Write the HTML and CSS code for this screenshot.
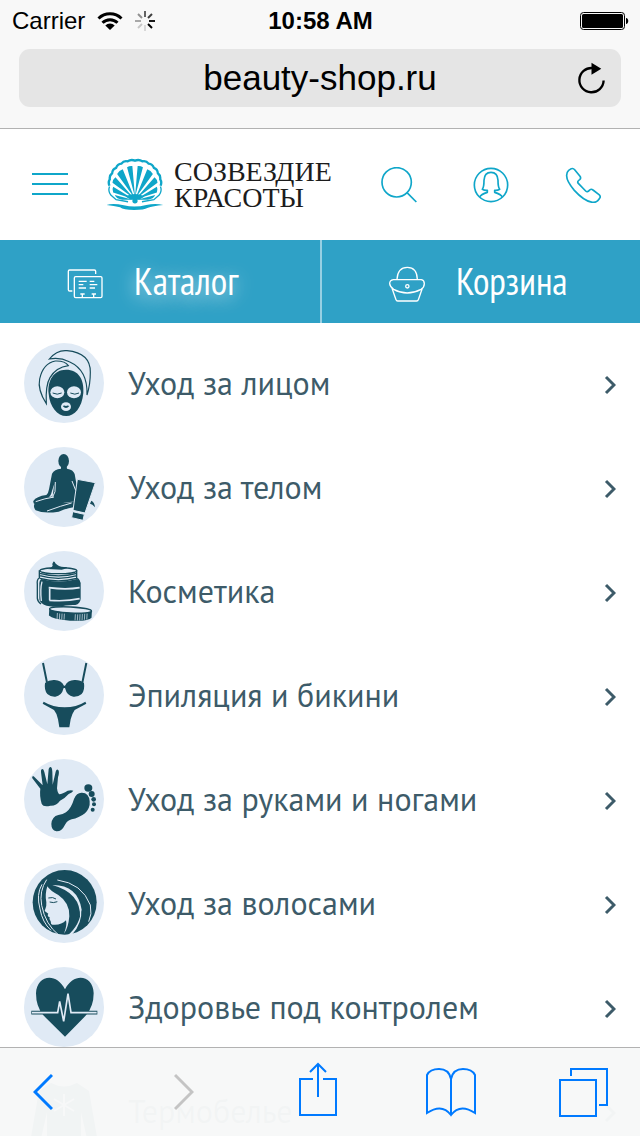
FILE: index.html
```html
<!DOCTYPE html>
<html lang="ru">
<head>
<meta charset="utf-8">
<meta name="viewport" content="width=device-width, initial-scale=1">
<title>Созвездие красоты</title>
<link rel="stylesheet" href="styles.css">
</head>
<body>
<div class="app">
  <div class="browser">
    <div class="status">
      <div class="status-left">
        <span>Carrier</span>
        <svg class="wifi" viewBox="0 0 26 20" width="26" height="20" aria-hidden="true">
          <g fill="none" stroke="#000" stroke-width="3"><path d="M1.500 7.500A16.500 16.500 0 0 1 24.500 7.500"/><path d="M5.500 11.800A10.500 10.500 0 0 1 20.500 11.800"/></g>
          <path d="M8.300 14.500A6.800 6.800 0 0 1 17.700 14.500L13 19Z"/>
        </svg>
        <svg viewBox="0 0 20 20" width="20" height="20" aria-hidden="true" fill="none" stroke="#000" stroke-width="2">
          <path d="M10 0v6" opacity=".6"/><path d="M17 3l-4 4" opacity=".75"/><path d="M20 10h-6" opacity=".9"/><path d="M17 17l-4-4"/><path d="M10 20v-6" opacity=".13"/><path d="M3 17l4-4" opacity=".2"/><path d="M0 10h6" opacity=".32"/><path d="M3 3l4 4" opacity=".42"/>
        </svg>
      </div>
      <strong class="time">10:58 AM</strong>
      <div class="status-right">
        <svg viewBox="0 0 50 20" width="50" height="20" aria-hidden="true"><rect x="1.500" y="1.500" width="44" height="17" rx="3" fill="none" stroke="#000"/><rect x="3" y="3" width="41" height="14" rx="1.500"/><path d="M47 7c3 0 3 6 0 6z"/></svg>
      </div>
    </div>
    <form class="address">
      <input class="url" type="text" value="beauty-shop.ru" aria-label="Адрес">
      <button class="reload" type="button" aria-label="Обновить">
        <svg viewBox="770 184 86 98" width="29" height="33" aria-hidden="true"><path d="M816 202A36 36 0 1 0 849 239" fill="none" stroke="#000" stroke-width="7"/><path d="M813 186l29 18-29 18z"/></svg>
      </button>
    </form>
  </div>

  <header class="header">
    <button class="icon-btn" type="button" aria-label="Меню">
      <svg viewBox="0 0 36 36" width="36" height="36" fill="none" stroke="#0fa6c9" stroke-width="2" aria-hidden="true"><path d="M0 7h36M0 17h36M0 27h36"/></svg>
    </button>
    <a class="logo" href="#">
      <svg viewBox="258 50 174 160" width="58" height="53" aria-hidden="true">
        <path d="M268 134q-5-10 1-20q-2-11 7-18q1-12 12-16q4-12 16-13q7-10 19-7q10-7 22-2q12-5 22 2q12-3 19 7q12 1 16 13q11 4 12 16q9 7 7 18q6 10 1 20" fill="none" stroke="#0fa6c9" stroke-width="7"/>
        <path d="M268 136q-5 14 4 26l16 14 36 6M422 136q5 14-4 26l-16 14-36 6" fill="none" stroke="#0fa6c9" stroke-width="4"/>
        <g fill="#0fa6c9">
          <path d="M345 168L337 74q-9-1-16 4zM345 168L353 74q9-1 16 4zM343 170L308 84q-11 4-17 14zM347 170L382 84q11 4 17 14zM342 172L286 108q-8 6-9 17zM348 172L404 108q8 6 9 17zM340 174L279 137q-4 8 0 17zM350 174L411 137q4 8 0 17zM338 176L284 162q5 12 22 14zM352 176L406 162q-5 12-22 14z"/>
          <path d="M316 166q29-14 58 0l-16 10h-26zM337 180a8 7 0 0 1 16 0a8 7 0 0 1-16 0zM259 192q20-6 52 1q34 8 68-1q28-6 51 0q-30 3-48 9q-8 6-40 6q-32 0-42-8q-18-4-41-7z"/>
        </g>
      </svg>
      <span class="logo-text">СОЗВЕЗДИЕ<br>КРАСОТЫ</span>
    </a>
    <div class="actions">
      <button class="icon-btn" type="button" aria-label="Поиск">
        <svg viewBox="63 48 108 108" width="36" height="36" fill="none" stroke="#0fa6c9" stroke-width="5" aria-hidden="true"><circle cx="110" cy="94" r="44"/><path d="M141 125l28 28"/></svg>
      </button>
      <button class="icon-btn" type="button" aria-label="Профиль">
        <svg viewBox="340 48 108 108" width="36" height="36" fill="none" stroke="#0fa6c9" stroke-width="5" stroke-linejoin="round" aria-hidden="true"><circle cx="394" cy="102" r="50"/><path d="M360 138q4-8 23-14v-6q-8 1-15-3q5-6 5-27q1-24 21-24t21 24q0 21 5 27q-7 4-15 3v6q19 6 23 14"/></svg>
      </button>
      <a class="icon-btn" href="#" aria-label="Позвонить">
        <svg viewBox="618 48 108 108" width="36" height="36" fill="none" stroke="#0fa6c9" stroke-width="5" stroke-linejoin="round" aria-hidden="true"><path d="M629 58l8-5q6-2 10 3l16 20q4 6-1 10q-9 6-4 11l22 23q5 5 11-2q5-6 11-1l18 14q5 4 3 9q-8 16-23 14q-25-4-54-36q-24-28-23-45q0-10 6-15z"/></svg>
      </a>
    </div>
  </header>

  <nav class="tabs">
    <a class="tab tab-active" href="#">
      <svg viewBox="199 93 108 108" width="36" height="36" fill="none" stroke="#fff" stroke-width="4" aria-hidden="true"><path d="M215 168h-8q-4 0-4-4v-55q0-4 4-4h74q4 0 4 4v8"/><rect x="221" y="125" width="83" height="63" rx="4"/><path d="M234 139h24M234 149h14M234 159h22M267 139h14M267 149h23M267 159h16M239 177h13M273 177h13M245 177v9M279 177v9"/></svg>
      <span>Каталог</span>
    </a>
    <a class="tab" href="#">
      <svg viewBox="207 91 108 108" width="36" height="36" fill="none" stroke="#fff" stroke-width="4" stroke-linejoin="round" aria-hidden="true"><path d="M231 131q2-36 31-36t30 36M220 132h84q9 2 9 12q0 10-10 17q-42 22-82 0q-11-7-12-17q0-10 11-12zM216 158l12 34q1 4 5 4h57q4 0 5-4l12-34"/><circle cx="262" cy="152" r="5"/></svg>
      <span>Корзина</span>
    </a>
  </nav>

  <main class="catalog">
    <ul class="list">
      <li><a class="row" href="#">
        <svg class="pic" viewBox="30 24 240 240" aria-hidden="true"><circle class="disc" cx="150" cy="144" r="120"/><g fill="none" stroke="#174c5c" stroke-width="3.500"><path d="M106 72Q129 44 159 47Q230 54 229 112Q229 150 219 180Q222 105 166 80Q137 66 106 72Z"/><path d="M97 206Q70 164 77 132Q87 85 124 78Q153 77 163 92Q126 97 108 128Q94 151 97 206Z"/></g><path class="ink" d="M156 104C194 104 211 134 208 174C204 219 181 243 157 243C130 243 107 215 104 176C100 137 119 104 156 104Z"/><g class="disc"><ellipse cx="130" cy="172" rx="21" ry="18"/><ellipse cx="180" cy="172" rx="21" ry="18"/><ellipse cx="156" cy="215" rx="15" ry="13"/></g><path d="M116 174q14 7 27 0M169 174q14 7 26 0" fill="none" stroke="#174c5c" stroke-width="3"/><path class="ink" d="M146 213q5-3 10 0q5-3 10 0q-10 12-20 0z"/></svg>
        <span class="label">Уход за лицом</span><svg class="chevron" viewBox="0 0 12 20" aria-hidden="true"><path d="M2 2l8 8-8 8"/></svg></a></li>
      <li><a class="row" href="#">
        <svg class="pic" viewBox="30 336 240 240" aria-hidden="true"><circle class="disc" cx="150" cy="456" r="120"/><g class="ink"><ellipse cx="149" cy="378" rx="16" ry="21"/><path d="M141 393h17l1 8q19 3 23 16l8 46-4 38q-20-3-42 4l40-5-2 16q-25 4-48 14q-45 7-69-4q-11-15 1-25q20-10 50-17l5-38-7 22q-4 18-15 23q-22 3-35 17q-7-1-6-10q9-14 39-18q6-4 8-17l9-47q7-14 27-15z"/><path d="M232 497q10 5 11 20q-8-10-15-11z"/></g><path d="M190 433l54 10-31 91-36-8zM176 530l35 8-4 18-34-8z" fill="#174c5c" stroke="#e0eaf5" stroke-width="3"/><path d="M124 441l-1 29-8 18M174 438l11 28M65 500q28-10 55-14M173 504l-34 10-40 14" fill="none" stroke="#e0eaf5" stroke-width="3"/></svg>
        <span class="label">Уход за телом</span><svg class="chevron" viewBox="0 0 12 20" aria-hidden="true"><path d="M2 2l8 8-8 8"/></svg></a></li>
      <li><a class="row" href="#">
        <svg class="pic" viewBox="30 24 240 240" aria-hidden="true"><circle class="disc" cx="150" cy="144" r="120"/><path class="ink" d="M99 78q14-3 17-10q-3-5 2-12q4-2 6 5q10 12 29 11q7-1 6 4l-16 4z"/><g fill="none" stroke="#174c5c" stroke-width="4"><ellipse cx="133" cy="83" rx="55" ry="9"/><path d="M77 91q56 15 112 0M77 98q56 16 112 0M78 106q55 15 110 0M76 82v23q-8 4-6 19v42q1 10 11 17M188 82v24q9 3 9 17"/></g><path class="ink" d="M82 108q52 15 107 0q11 4 11 16v43q-1 15-16 19q-25-1-49 5q-28 1-45-6q-15-7-14-20v-45q0-8 6-12z"/><g fill="none" stroke="#e0eaf5" stroke-width="4"><path d="M84 116q-6 22-2 58"/><path d="M107 134v38M104 134q52 7 93 0M106 172q50 4 91-5" stroke-width="5"/></g><g transform="rotate(3 169 215)"><path d="M105 199q30 10 128 0v22q-8 12-64 12q-52-1-64-12z" class="ink"/><ellipse cx="169" cy="201" rx="63" ry="9" fill="#e0eaf5" stroke="#174c5c" stroke-width="4"/><path d="M130 212v18M137 213v18M144 213v18M151 213v18M184 213v18M191 213v18M198 212v19M205 211v19M212 210v18M219 209v18" stroke="#e0eaf5" stroke-width="2"/></g></svg>
        <span class="label">Косметика</span><svg class="chevron" viewBox="0 0 12 20" aria-hidden="true"><path d="M2 2l8 8-8 8"/></svg></a></li>
      <li><a class="row" href="#">
        <svg class="pic" viewBox="30 336 240 240" aria-hidden="true"><circle class="disc" cx="150" cy="456" r="120"/><path d="M87 360l12 59M217 360l-12 59" stroke="#174c5c" stroke-width="6"/><g class="ink"><path d="M93 420q12-10 29-9q20 1 28 17h3q8-16 28-17q18-1 29 9q3 22-7 33q-10 9-25 8q-19-2-25-26h-4q-6 24-25 26q-14 1-24-8q-10-12-7-33z"/><path d="M89 476q28 17 63 17t62-17l3 6-35 19q-9 13-12 28l-4 24h-30l-4-24q-2-16-12-28l-34-19z"/></g></svg>
        <span class="label">Эпиляция и бикини</span><svg class="chevron" viewBox="0 0 12 20" aria-hidden="true"><path d="M2 2l8 8-8 8"/></svg></a></li>
      <li><a class="row" href="#">
        <svg class="pic" viewBox="30 24 240 240" aria-hidden="true"><circle class="disc" cx="150" cy="144" r="120"/><g class="ink"><path d="M79 113L55 82q-3-7 4-6q14 14 27 27L81 64q-1-10 5-10q4 2 7 17l7 29 4-46q2-7 7-6q4 3 4 14l1 39 9-39q3-10 8-5q4 6-1 22l-3 33q2 15 7 18q9-1 25-11q11-3 17 0q-3 6-14 10q-13 15-26 20q-11 16-29 15q-21 5-26-6q-7-24-4-45z"/><path d="M180 144q8-20 24-19q21 0 23 26q2 20-14 36q-18 14-40 18q-12 3-20 16q-10 21-26 20q-15-3-15-22q2-23 21-27q14-1 23-8q16-12 24-40z"/><ellipse cx="223" cy="111" rx="12" ry="11"/><circle cx="233" cy="129" r="9"/><circle cx="239" cy="145" r="7"/><circle cx="240" cy="160" r="6"/><circle cx="236" cy="176" r="6"/></g></svg>
        <span class="label">Уход за руками и ногами</span><svg class="chevron" viewBox="0 0 12 20" aria-hidden="true"><path d="M2 2l8 8-8 8"/></svg></a></li>
      <li><a class="row" href="#">
        <svg class="pic" viewBox="30 336 240 240" aria-hidden="true"><circle class="disc" cx="150" cy="456" r="120"/><ellipse class="ink" cx="152" cy="454" rx="96" ry="97"/><path class="disc" d="M100 406Q108 419 133 432Q168 456 166 496Q163 531 150 548Q160 522 156 508Q141 524 115 521Q110 520 110 511Q104 505 107 499Q98 495 103 488L92 480Q99 466 97 454Q92 431 100 406Z"/><path d="M98 386Q75 420 83 463Q94 520 134 552M84 400Q66 430 78 474Q85 514 111 538M130 387Q204 397 229 462Q235 490 224 512" fill="none" stroke="#e0eaf5" stroke-width="3"/><path class="disc" d="M158 556q42-34 44-84q3 45-27 78l-17 10zM115 402q76-1 88 74l-5 24q4-74-83-98z"/><path d="M103 441q14-4 23 3M107 453q11 4 23-1" fill="none" stroke="#174c5c" stroke-width="3"/></svg>
        <span class="label">Уход за волосами</span><svg class="chevron" viewBox="0 0 12 20" aria-hidden="true"><path d="M2 2l8 8-8 8"/></svg></a></li>
      <li><a class="row" href="#">
        <svg class="pic" viewBox="30 36 240 240" aria-hidden="true"><circle class="disc" cx="150" cy="156" r="120"/><path class="ink" d="M153 245L88 181Q66 155 66 115C68 61 126 49 153 103C180 49 238 61 239 115Q239 154 216 181Z"/><path d="M52 173h79l6-34 12 60 13-83 9 57h79" fill="none" stroke="#174c5c" stroke-width="11"/><path d="M54 173h77l6-34 12 60 13-83 9 57h77" fill="none" stroke="#e0eaf5" stroke-width="5"/></svg>
        <span class="label">Здоровье под контролем</span><svg class="chevron" viewBox="0 0 12 20" aria-hidden="true"><path d="M2 2l8 8-8 8"/></svg></a></li>
      <li><a class="row" href="#">
        <svg class="pic" viewBox="0 0 80 80" aria-hidden="true"><circle class="disc" cx="40" cy="40" r="40"/><path class="ink" d="M27 12q13 7 26 0l12 8 9 52H64l-7-31v39H23V41l-7 31H6l9-52z"/><path d="M40 23v22M30 28l20 12M50 28L30 40" stroke="#e0eaf5" stroke-width="2"/></svg>
        <span class="label">Термобелье</span><svg class="chevron" viewBox="0 0 12 20" aria-hidden="true"><path d="M2 2l8 8-8 8"/></svg></a></li>
    </ul>
  </main>

  <div class="toolbar">
    <button class="tool tool-back" type="button" aria-label="Назад"><svg viewBox="0 0 20 38" width="20" height="38"><path d="M19 2L2 19l17 17"/></svg></button>
    <button class="tool tool-off" type="button" aria-label="Вперёд" disabled><svg viewBox="0 0 20 38" width="20" height="38"><path d="M1 2l17 17L1 36"/></svg></button>
    <button class="tool" type="button" aria-label="Поделиться"><svg viewBox="0 0 38 60" width="38" height="60"><path d="M14 17H1v36h36V17H24M19 35V2M11 10l8-8 8 8"/></svg></button>
    <button class="tool" type="button" aria-label="Закладки"><svg viewBox="0 0 50 50" width="50" height="50"><path d="M25 12Q23 2 13 2Q4 2 1 8V46Q16 36 25 48Q34 36 49 46V8Q46 2 37 2Q27 2 25 12V48"/></svg></button>
    <button class="tool" type="button" aria-label="Вкладки"><svg viewBox="0 0 50 50" width="50" height="50"><path d="M1 13h36v36H1zM12 9V2h36v36h-8"/></svg></button>
  </div>
</div>
</body>
</html>
```
FILE: styles.css
```css
* {
  box-sizing: border-box;
}

body {
  margin: 0;
  background: #fff;
  font-family: "PT Sans", "Noto Sans", sans-serif;
}

a {
  color: inherit;
  text-decoration: none;
}

button,
input {
  margin: 0;
  padding: 0;
  border: 0;
  background: none;
  font: inherit;
  color: inherit;
}

svg {
  display: block;
  flex: none;
}

.app {
  display: flex;
  flex-direction: column;
  height: 100vh;
}

.browser {
  flex: none;
  padding-bottom: 21px;
  border-bottom: 1px solid #b2b2b2;
  background: #f8f8f8;
  color: #000;
  font-family: "Liberation Sans", Arial, sans-serif;
}

.status {
  display: grid;
  grid-template-columns: 1fr auto 1fr;
  align-items: center;
  height: 41px;
  margin-bottom: 8px;
  padding: 0 11px 0 12px;
  font-size: 24px;
  line-height: 28px;
}

.status-left {
  display: flex;
  align-items: center;
  gap: 12px;
}

.status-right {
  display: flex;
  justify-content: flex-end;
}

.address {
  display: flex;
  height: 58px;
  margin: 0 19px;
  border-radius: 11px;
  background: #e5e5e5;
}

.url {
  flex: 1;
  min-width: 0;
  padding-left: 60px;
  font-size: 35px;
  text-align: center;
}

.reload {
  display: flex;
  align-items: center;
  justify-content: center;
  width: 60px;
}

.header {
  display: flex;
  flex: none;
  align-items: center;
  height: 111px;
  padding: 0 39px 0 32px;
}

.icon-btn {
  display: block;
}

.logo {
  display: flex;
  align-items: center;
  gap: 10px;
  margin-left: 38px;
  color: #1c1c1c;
}

.logo-text {
  font-family: "Liberation Serif", serif;
  font-size: 28px;
  line-height: 26px;
}

.actions {
  display: flex;
  gap: 56px;
  margin-left: auto;
}

.tabs {
  display: grid;
  flex: none;
  grid-template-columns: 1fr 1fr;
  background: #2fa1c6;
}

.tab {
  display: flex;
  align-items: center;
  gap: 31px;
  height: 83px;
  padding: 0 0 3px 67px;
  color: #fff;
  font-family: "PT Sans Narrow", "Liberation Sans Narrow", "Noto Sans", sans-serif;
  font-size: 38px;
}

.tab + .tab {
  border-left: 2px solid #97d0e3;
}

.tab svg {
  margin-top: 8px;
}

.tab-active span {
  text-shadow: 0 4px 18px rgba(255, 255, 255, 0.7);
}

.catalog {
  flex: 1;
  min-height: 0;
  overflow: hidden;
}

.list {
  margin: 0;
  padding: 8px 0 0;
  list-style: none;
}

.row {
  display: flex;
  align-items: center;
  gap: 24px;
  height: 104px;
  padding: 0 24px;
  color: #3d5b69;
  font-size: 32px;
  line-height: 40px;
}

.pic {
  width: 80px;
  height: 80px;
}

.disc {
  fill: #e0eaf5;
}

.ink {
  fill: #174c5c;
}

.label {
  flex: 1;
  white-space: nowrap;
}

.chevron {
  width: 12px;
  height: 20px;
  margin-top: 4px;
  fill: none;
  stroke: #3d5b69;
  stroke-width: 3;
}

.toolbar {
  position: fixed;
  right: 0;
  bottom: 0;
  left: 0;
  display: flex;
  align-items: center;
  justify-content: space-between;
  height: 89px;
  padding: 0 31px 0 18px;
  border-top: 1px solid #b2b2b2;
  background: rgba(247, 248, 248, 0.975);
}

.tool {
  display: flex;
  align-items: center;
  justify-content: center;
  width: 50px;
  height: 54px;
}

.tool svg {
  fill: none;
  stroke: #007aff;
  stroke-width: 2;
}

.tool-back {
  width: 58px;
  padding-right: 8px;
}

.tool-back svg,
.tool-off svg {
  stroke-width: 3;
}

.tool-off svg {
  stroke: #c4c4c4;
}
```
